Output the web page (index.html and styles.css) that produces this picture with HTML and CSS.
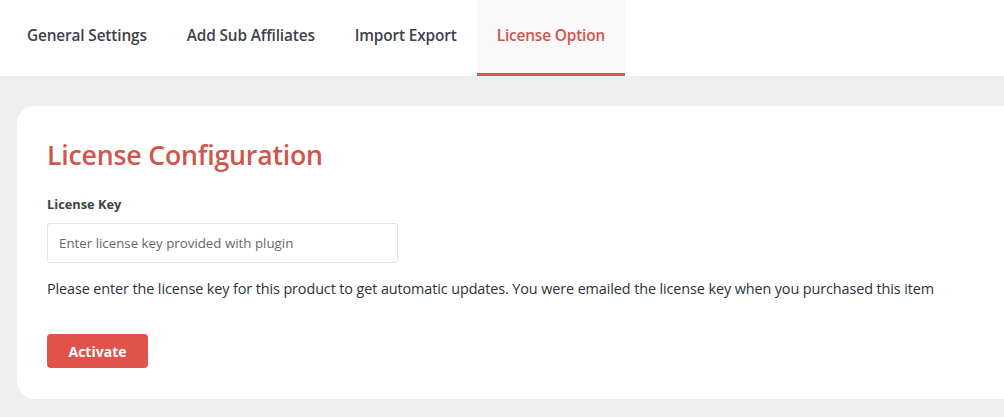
FILE: index.html
```html
<!DOCTYPE html>
<html lang="en">
<head>
    <meta charset="UTF-8">
    <meta name="viewport" content="width=device-width, initial-scale=1.0">
    <title>License Option</title>
    <link rel="stylesheet" href="styles.css">
</head>
<body>
    <nav class="tabs">
        <a class="tab" href="#">General Settings</a>
        <a class="tab" href="#">Add Sub Affiliates</a>
        <a class="tab" href="#">Import Export</a>
        <a class="tab active" href="#">License Option</a>
    </nav>
    <main class="page">
        <section class="card">
            <h2>License Configuration</h2>
            <label for="licenseKey">License Key</label>
            <input type="text" id="licenseKey" placeholder="Enter license key provided with plugin">
            <p class="help">Please enter the license key for this product to get automatic updates. You were emailed the license key when you purchased this item</p>
            <button class="btn">Activate</button>
        </section>
    </main>
</body>
</html>
```

FILE: styles.css
```css
body {
    font-family: 'Open Sans', 'Noto Sans', sans-serif;
    margin: 0;
    padding: 0;
    background: #efeff0;
    color: #333;
    overflow: hidden;
}

.tabs {
    display: flex;
    background: #ffffff;
    height: 76px;
    padding-left: 7px;
}

.tab {
    display: flex;
    align-items: center;
    padding: 0 20px 3px;
    font-size: 15.4px;
    font-weight: 600;
    color: #3c434a;
    text-decoration: none;
    border-bottom: 3px solid transparent;
    letter-spacing: -0.15px;
}

.tab.active {
    color: #d0554b;
    background: #f9f9f9;
    border-bottom-color: #d35a4d;
}

.page {
    padding: 30px 0 18px 17px;
}

.card {
    background: #ffffff;
    border-radius: 18px 0 0 18px;
    padding: 30px;
    height: 233px;
}

.card h2 {
    margin: 0 0 22px;
    font-size: 26.7px;
    font-weight: 600;
    color: #d0554b;
    letter-spacing: -0.2px;
}

label {
    display: block;
    font-size: 12.8px;
    font-weight: 700;
    color: #3c434a;
    margin-bottom: 10px;
}

input {
    display: block;
    box-sizing: border-box;
    width: 351px;
    height: 40px;
    padding: 0 11px;
    border: 1px solid #e3e3e3;
    border-radius: 3px;
    font-family: inherit;
    font-size: 13.3px;
    color: #333;
}

input::placeholder {
    color: #666;
}

.help {
    margin: 16px 0 36px;
    font-size: 14.4px;
    color: #2c3338;
    letter-spacing: -0.1px;
}

.btn {
    background: #e0524a;
    color: #ffffff;
    border: none;
    border-radius: 4px;
    width: 101px;
    height: 34px;
    font-family: inherit;
    font-size: 14px;
    font-weight: 700;
}
```
